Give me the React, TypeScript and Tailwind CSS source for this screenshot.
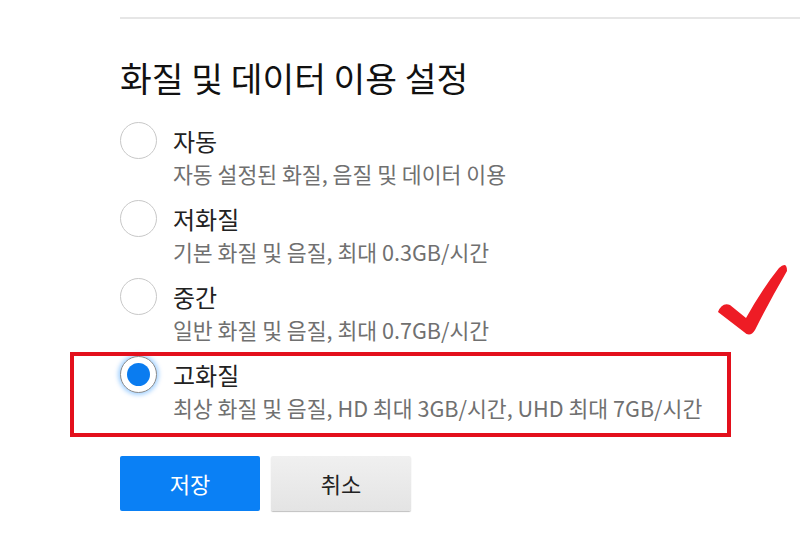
const options = [
  { label: '자동', desc: '자동 설정된 화질, 음질 및 데이터 이용' },
  { label: '저화질', desc: '기본 화질 및 음질, 최대 0.3GB/시간' },
  { label: '중간', desc: '일반 화질 및 음질, 최대 0.7GB/시간' },
  { label: '고화질', desc: '최상 화질 및 음질, HD 최대 3GB/시간, UHD 최대 7GB/시간', checked: true },
]

function Radio({ checked }: { checked?: boolean }) {
  if (checked) {
    return (
      <div className="flex h-[37px] w-[37px] shrink-0 items-center justify-center rounded-full border border-[#8a8a8a] bg-white shadow-[0_0_4px_2px_rgba(0,128,255,0.35)]">
        <div className="h-[23px] w-[23px] rounded-full bg-[#0a7cf0]" />
      </div>
    )
  }
  return <div className="h-[37px] w-[37px] shrink-0 rounded-full border-[1.5px] border-[#c8c8c8] bg-white" />
}

export default function App() {
  return (
    <main className="relative h-[550px] w-[800px] overflow-hidden bg-white pl-[120px] pt-[17px] text-[#222] [font-family:'Noto_Sans_CJK_KR','Noto_Sans',sans-serif]">
      <div className="h-[2px] w-full bg-[#e6e6e6]" />
      <h1 className="mt-[35px] text-[34.5px] leading-[46px] font-normal text-[#111]">화질 및 데이터 이용 설정</h1>
      <div className="mt-[22px] flex flex-col gap-[11px]">
        {options.map((o) => (
          <div key={o.label} className="relative flex items-start gap-4">
            {o.checked && (
              <div className="pointer-events-none absolute left-[-50px] top-[-4px] h-[85px] w-[661px] border-4 border-[#e3101c]" />
            )}
            <Radio checked={o.checked} />
            <div className="flex flex-col">
              <span className="text-[24px] leading-[37px]">{o.label}</span>
              <span className="text-[21.6px] leading-[30px] text-[#707070]">{o.desc}</span>
            </div>
          </div>
        ))}
      </div>
      <div className="mt-[33px] flex gap-[11px]">
        <button className="h-[55px] w-[140px] rounded-[2px] bg-[#0a80f5] text-[22px] text-white">저장</button>
        <button className="h-[55px] w-[140px] rounded-[2px] bg-gradient-to-b from-[#f0f0f0] to-[#e4e4e4] text-[22px] text-[#222] shadow-[0_1px_1px_rgba(0,0,0,0.25)]">취소</button>
      </div>
      <svg className="absolute left-[715px] top-[262px]" width="75" height="75" viewBox="0 0 75 75">
        <path d="M3 50 Q7 40 15 43 L31 56 Q47 27 64 6 Q72 -1 72 9 Q54 40 40 68 Q35 76 29 70 Z" fill="#ee1c25" />
      </svg>
    </main>
  )
}
